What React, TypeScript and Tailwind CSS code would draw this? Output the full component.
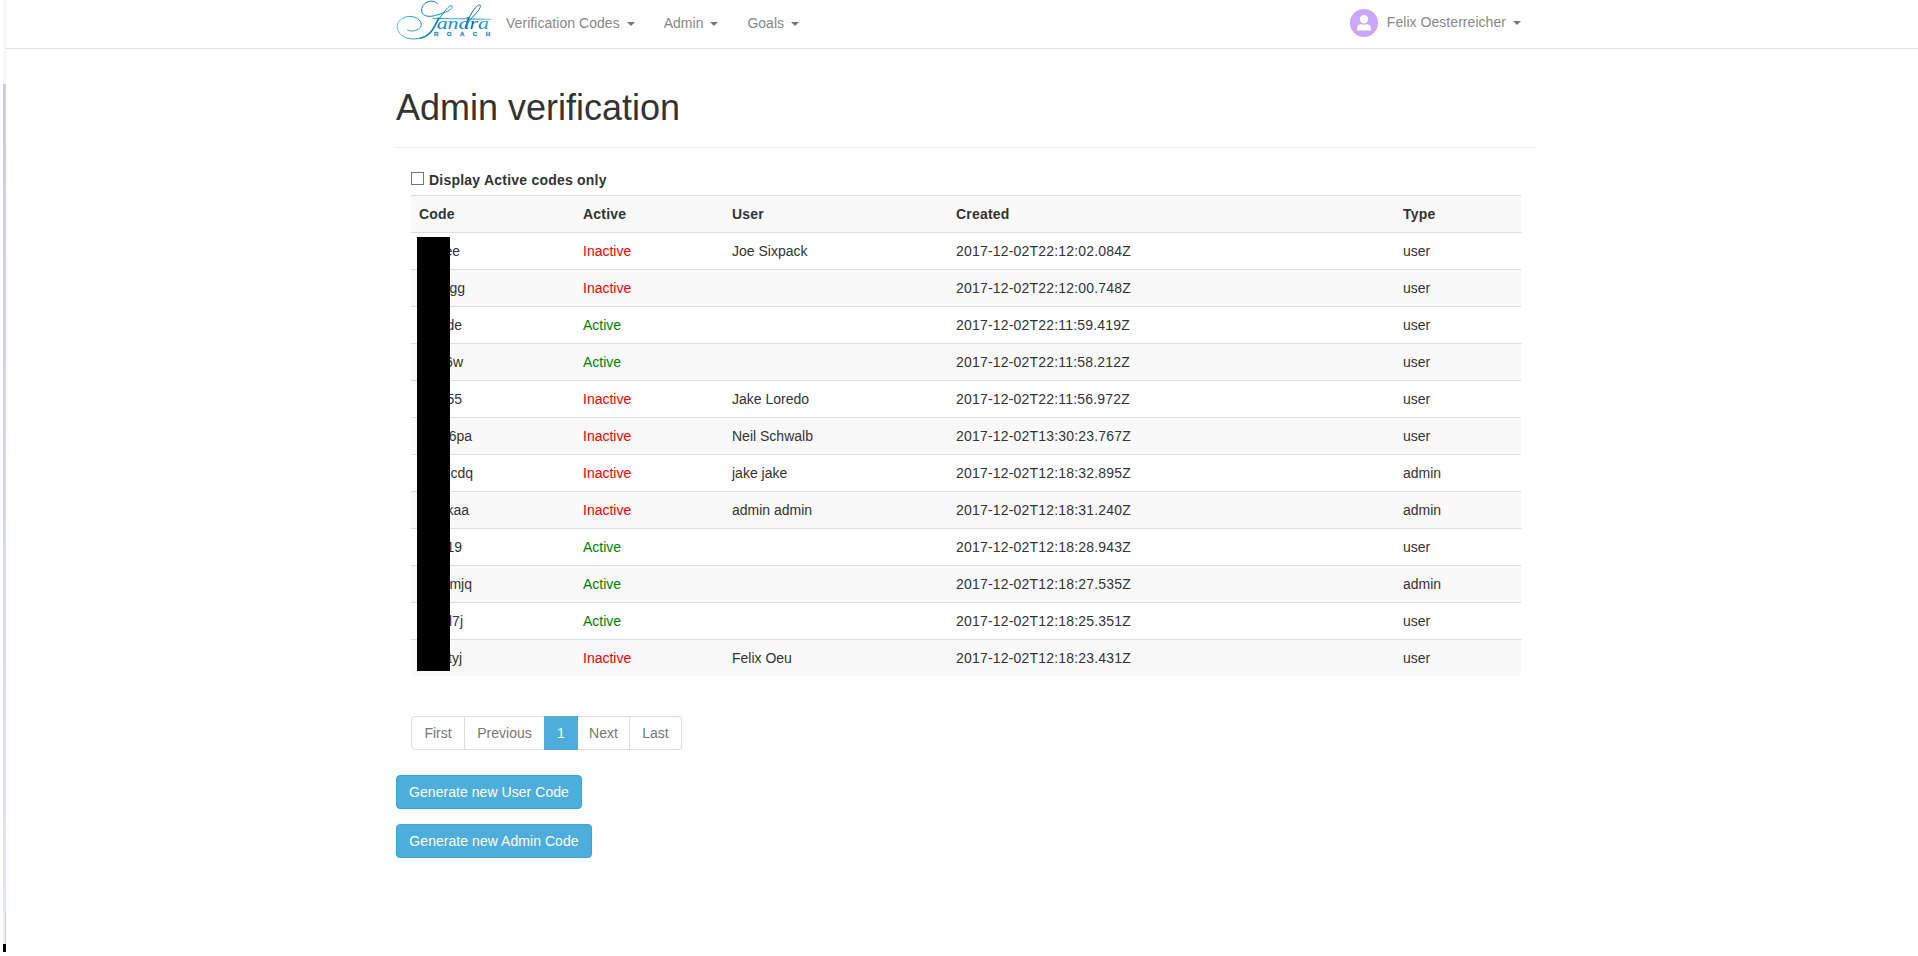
type Row = { code: string; width: string; active: boolean; user: string; created: string; type: string };

const rows: Row[] = [
  { code: 'ee', width: 'w-[41px]', active: false, user: 'Joe Sixpack', created: '2017-12-02T22:12:02.084Z', type: 'user' },
  { code: 'gg', width: 'w-[46px]', active: false, user: '', created: '2017-12-02T22:12:00.748Z', type: 'user' },
  { code: 'de', width: 'w-[43px]', active: true, user: '', created: '2017-12-02T22:11:59.419Z', type: 'user' },
  { code: '6w', width: 'w-[44px]', active: true, user: '', created: '2017-12-02T22:11:58.212Z', type: 'user' },
  { code: '55', width: 'w-[43px]', active: false, user: 'Jake Loredo', created: '2017-12-02T22:11:56.972Z', type: 'user' },
  { code: '6pa', width: 'w-[53px]', active: false, user: 'Neil Schwalb', created: '2017-12-02T13:30:23.767Z', type: 'user' },
  { code: 'cdq', width: 'w-[54px]', active: false, user: 'jake jake', created: '2017-12-02T12:18:32.895Z', type: 'admin' },
  { code: 'kaa', width: 'w-[50px]', active: false, user: 'admin admin', created: '2017-12-02T12:18:31.240Z', type: 'admin' },
  { code: '19', width: 'w-[43px]', active: true, user: '', created: '2017-12-02T12:18:28.943Z', type: 'user' },
  { code: 'mjq', width: 'w-[53px]', active: true, user: '', created: '2017-12-02T12:18:27.535Z', type: 'admin' },
  { code: 'd7j', width: 'w-[44px]', active: true, user: '', created: '2017-12-02T12:18:25.351Z', type: 'user' },
  { code: 'tyj', width: 'w-[43px]', active: false, user: 'Felix Oeu', created: '2017-12-02T12:18:23.431Z', type: 'user' },
];

function Logo() {
  return (
    <svg className="h-[44px] w-[98px] shrink-0" viewBox="0 0 294 132" fill="none">
      <defs>
        <linearGradient id="ink" gradientUnits="userSpaceOnUse" x1="0" y1="0" x2="285" y2="0">
          <stop offset="0" stopColor="#4cc9f5" />
          <stop offset="0.35" stopColor="#087bc5" />
          <stop offset="0.6" stopColor="#149bdc" />
          <stop offset="0.82" stopColor="#0869af" />
          <stop offset="1" stopColor="#45b7e6" />
        </linearGradient>
      </defs>
      <g stroke="url(#ink)" strokeLinecap="round">
        <path d="M125 12C116-3 84 1 77 25C73 49 98 53 119 46C147 38 172 29 168 18C162 8 131 51 115 82C100 110 66 122 36 115C-3 105-5 66 21 54C44 42 74 54 76 72C77 87 54 98 35 91" strokeWidth="3" />
        <path d="M128 54C120 69 113 88 101 100C93 108 84 112 74 115" strokeWidth="4.5" />
        <path d="M111 55L284 58" strokeWidth="2.5" />
        <path d="M208 80C222 54 257 29 253 16C244 8 219 46 208 80" strokeWidth="3" />
      </g>
      <text x="122" y="88" fontSize="47" textLength="157" lengthAdjust="spacingAndGlyphs" fill="url(#ink)" className="font-['Liberation_Serif',serif] italic">andra</text>
      <text x="114" y="108" fontSize="18" textLength="168" fill="#268fc4" stroke="#268fc4" strokeWidth="1" className="font-['Liberation_Sans_Narrow','Liberation_Sans',sans-serif] font-bold">ROACH</text>
    </svg>
  );
}

function Caret() {
  return <span className="ml-[7px] inline-block border-x-4 border-t-4 border-x-transparent border-t-[#777] align-middle" />;
}

export default function App() {
  return (
    <div className="relative h-[956px] w-full overflow-hidden bg-white font-['Liberation_Sans',Arial,sans-serif] text-[14px] leading-5 text-[#333]">
      <div className="absolute top-0 left-[3px] flex h-[952px] w-[3px] flex-col">
        <div className="h-[84px] bg-[#f5f8f8]" />
        <div className="h-[828px] bg-linear-to-b from-[#c5cee3] to-[#dce6f4]" />
        <div className="h-[32px] border-r border-[#ccc] bg-[#eee]" />
        <div className="h-2 bg-black" />
      </div>
      <header className="ml-[6px] h-[49px] border-b border-[#e1e1e1] text-[#888]">
        <div className="ml-[390px] flex w-[1125px]">
          <Logo />
          <nav className="ml-3 flex gap-[29px] pt-[13px]">
            <a className="tracking-[0.05px]">Verification Codes<Caret /></a>
            <a>Admin<Caret /></a>
            <a>Goals<Caret /></a>
          </nav>
          <div className="ml-auto flex gap-[9px] pt-[9px]">
            <svg className="size-7" viewBox="0 0 28 28">
              <circle cx="14" cy="14" r="14" fill="#cba6ff" />
              <circle cx="14" cy="10.3" r="4.2" fill="white" />
              <path d="M7 21.5v-1.7c0-3 2-4.6 4-4.8 2 1 4 1 6 0 2 .2 4 1.8 4 4.8v1.7Z" fill="white" />
            </svg>
            <a className="mt-[3px] tracking-[0.05px]">Felix Oesterreicher<Caret /></a>
          </div>
        </div>
      </header>
      <main className="ml-[396px] w-[1140px]">
        <h1 className="h-[99px] border-b border-[#eee] pt-[39px] text-[36px] leading-10">Admin verification</h1>
        <section className="px-[15px] pt-[22px]">
          <label className="flex h-[25px] font-bold tracking-[0.22px]">
            <input type="checkbox" className="mt-[2px] mr-[5px] size-[13px] appearance-none border border-[#777] bg-white" />
            <span>Display Active codes only</span>
          </label>
          <div className="relative">
            <table className="w-[1110px] table-fixed border-separate border-spacing-0 text-left">
              <colgroup>
                <col className="w-[164px]" />
                <col className="w-[149px]" />
                <col className="w-[224px]" />
                <col className="w-[447px]" />
                <col className="w-[126px]" />
              </colgroup>
              <thead>
                <tr className="h-[37px] bg-[#f9f9f9]">
                  {['Code', 'Active', 'User', 'Created', 'Type'].map((h) => (
                    <th key={h} className="border-t border-[#ddd] px-2 py-0 tracking-[0.2px]">{h}</th>
                  ))}
                </tr>
              </thead>
              <tbody>
                {rows.map((r) => (
                  <tr key={r.created} className="h-[37px] even:bg-[#f9f9f9]">
                    <td className="border-t border-[#ddd] px-2 py-0"><div className={`${r.width} text-right`}>{r.code}</div></td>
                    <td className={r.active ? 'border-t border-[#ddd] px-2 py-0 text-[#008000]' : 'border-t border-[#ddd] px-2 py-0 text-[#ff0000]'}>{r.active ? 'Active' : 'Inactive'}</td>
                    <td className="border-t border-[#ddd] px-2 py-0">{r.user}</td>
                    <td className="border-t border-[#ddd] px-2 py-0 tracking-[0.19px]">{r.created}</td>
                    <td className="border-t border-[#ddd] px-2 py-0">{r.type}</td>
                  </tr>
                ))}
              </tbody>
            </table>
            <div className="absolute top-[42px] left-[6px] h-[434px] w-[33px] bg-black" />
          </div>
          <div className="mt-10 flex h-[34px] w-[271px] text-[#777]">
            <button className="w-[54px] rounded-l border border-[#ddd]">First</button>
            <button className="w-[79px] border-y border-[#ddd]">Previous</button>
            <button className="w-[34px] bg-[#4eaedb] text-white">1</button>
            <button className="w-[52px] border-y border-r border-[#ddd]">Next</button>
            <button className="w-[52px] rounded-r border-y border-r border-[#ddd]">Last</button>
          </div>
        </section>
        <div className="mt-[25px] flex flex-col items-start gap-[15px] tracking-[0.05px] text-white">
          <button className="h-[34px] w-[186px] rounded border border-[#3aa5d7] bg-[#4eaedb]">Generate new User Code</button>
          <button className="h-[34px] w-[196px] rounded border border-[#3aa5d7] bg-[#4eaedb]">Generate new Admin Code</button>
        </div>
      </main>
    </div>
  );
}
